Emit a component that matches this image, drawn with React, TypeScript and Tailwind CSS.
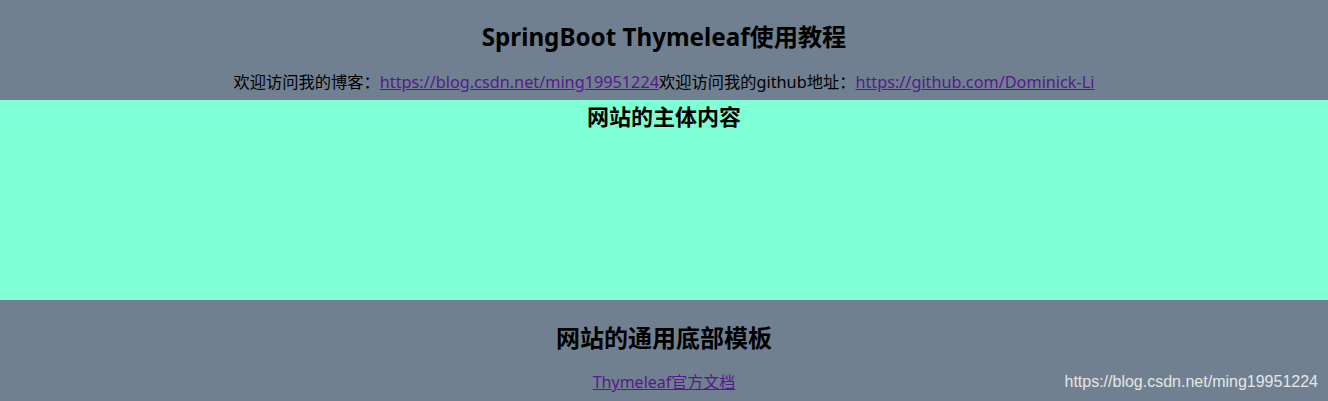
export default function App() {
  const font = { fontFamily: '"Noto Sans", "Noto Sans CJK SC", sans-serif' };
  return (
    <div style={font} className="relative w-full h-[401px] bg-[#708090] text-black overflow-hidden">
      <header className="h-[100px] flex flex-col items-center pt-[21px]">
        <h2 className="text-[24.2px] leading-[32px] font-bold">SpringBoot Thymeleaf使用教程</h2>
        <p className="mt-[17px] text-[16.25px] leading-[24px]">
          欢迎访问我的博客：
          <a href="#" className="text-[#551a8b] underline">https://blog.csdn.net/ming19951224</a>
          欢迎访问我的github地址：
          <a href="#" className="text-[#551a8b] underline">https://github.com/Dominick-Li</a>
        </p>
      </header>
      <main className="h-[200px] bg-[#7fffd4] flex flex-col items-center pt-[2px]">
        <h3 className="text-[22px] leading-[28px] font-bold">网站的主体内容</h3>
      </main>
      <footer className="h-[101px] flex flex-col items-center pt-[22px]">
        <h2 className="text-[24px] leading-[32px] font-bold">网站的通用底部模板</h2>
        <a href="#" className="mt-[16px] text-[16px] leading-[24px] text-[#551a8b] underline">Thymeleaf官方文档</a>
      </footer>
      <div
        style={{ fontFamily: '"Liberation Sans", Arial, sans-serif' }}
        className="absolute right-[10px] bottom-[9px] text-[16px] leading-[20px] text-[#e6e6e6]"
      >
        https://blog.csdn.net/ming19951224
      </div>
    </div>
  );
}
